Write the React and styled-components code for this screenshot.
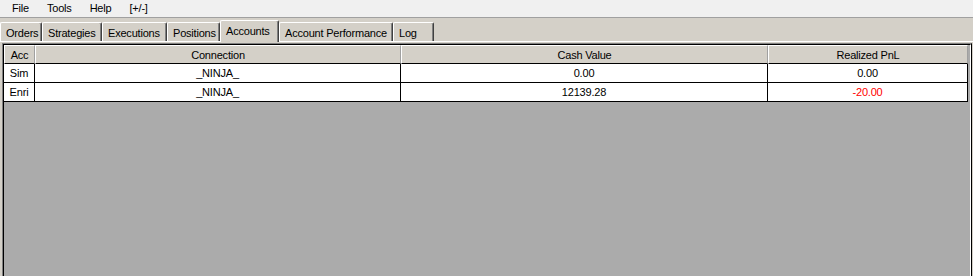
import React from "react";
import styled, { createGlobalStyle } from "styled-components";

const Global = createGlobalStyle`
  html, body { margin: 0; padding: 0; height: 100%; overflow: hidden; }
  body { font-family: "Liberation Sans", Arial, sans-serif; font-size: 11px; letter-spacing: -0.2px; color: #000; background: #d4d0c8; }
  #root { height: 100%; }
`;

const Window = styled.div`
  display: flex;
  flex-direction: column;
  height: 100%;
`;

const MenuBar = styled.div`
  display: flex;
  align-items: center;
  height: 17px;
  padding-left: 3px;
  background: #f0f0f0;
  border-bottom: 1px solid #a0a0a0;
`;

const MenuItem = styled.div`
  padding: 0 9px;
  line-height: 17px;
  font-size: 11px;
`;

const TabRow = styled.div`
  display: flex;
  align-items: flex-end;
  height: 23px;
  background: #d4d0c8;
`;

const Tab = styled.div`
  box-sizing: border-box;
  width: ${(p) => p.$w}px;
  height: ${(p) => (p.$active ? 22 : 19)}px;
  margin-bottom: ${(p) => (p.$active ? -1 : 0)}px;
  position: relative;
  z-index: ${(p) => (p.$active ? 2 : 1)};
  background: #d4d0c8;
  border-top: 1px solid #fff;
  border-left: 1px solid #fff;
  border-right: 1px solid #404040;
  box-shadow: inset -1px 0 0 #808080;
  border-radius: 2px 2px 0 0;
  display: flex;
  align-items: center;
  padding: ${(p) => (p.$active ? "0 0 1px 5px" : "2px 0 0 5px")};
  white-space: nowrap;
`;

const Panel = styled.div`
  flex: 1;
  display: flex;
  flex-direction: column;
  background: #d4d0c8;
  border-top: 1px solid #fff;
  padding: 1px 1px 0 2px;
  min-height: 0;
`;

const GridBox = styled.div`
  flex: 1;
  display: flex;
  border-top: 1px solid #808080;
  border-left: 1px solid #808080;
  border-right: 1px solid #000;
  min-height: 0;
`;

const GridInner = styled.div`
  flex: 1;
  background: #ababab;
  border-top: 1px solid #000;
  border-left: 1px solid #000;
  border-right: 1px solid #fff;
  min-height: 0;
`;

const Table = styled.div`
  display: grid;
  grid-template-columns: 31px 366px 367px 200px;
  grid-auto-rows: 19px;
  width: 964px;
`;

const HeadCell = styled.div`
  box-sizing: border-box;
  background: #d4d0c8;
  border-top: 1px solid #fff;
  border-left: 1px solid #fff;
  border-right: 1px solid #a0a0a0;
  border-bottom: 1px solid #000;
  display: flex;
  align-items: center;
  justify-content: center;
  white-space: nowrap;
`;

const Cell = styled.div`
  box-sizing: border-box;
  background: #fff;
  border-right: 1px solid #000;
  border-bottom: 1px solid #000;
  display: flex;
  align-items: center;
  justify-content: center;
  white-space: nowrap;
  color: ${(p) => (p.$neg ? "#ff0000" : "#000")};
`;

const menus = ["File", "Tools", "Help", "[+/-]"];
const tabs = [
  ["Orders", 42],
  ["Strategies", 60],
  ["Executions", 65],
  ["Positions", 53],
  ["Accounts", 59],
  ["Account Performance", 114],
  ["Log", 41],
];
const columns = ["Acc", "Connection", "Cash Value", "Realized PnL"];
const rows = [
  ["Sim", "_NINJA_", "0.00", "0.00"],
  ["Enri", "_NINJA_", "12139.28", "-20.00"],
];

export default function App() {
  return (
    <Window>
      <Global />
      <MenuBar>
        {menus.map((m) => (
          <MenuItem key={m}>{m}</MenuItem>
        ))}
      </MenuBar>
      <TabRow>
        {tabs.map(([t, w]) => (
          <Tab key={t} $w={w} $active={t === "Accounts"}>
            {t}
          </Tab>
        ))}
      </TabRow>
      <Panel>
        <GridBox>
          <GridInner>
            <Table>
              {columns.map((c) => (
                <HeadCell key={c}>{c}</HeadCell>
              ))}
              {rows.map((r) =>
                r.map((v, i) => (
                  <Cell key={r[0] + i} $neg={v.startsWith("-")}>
                    {v}
                  </Cell>
                ))
              )}
            </Table>
          </GridInner>
        </GridBox>
      </Panel>
    </Window>
  );
}
